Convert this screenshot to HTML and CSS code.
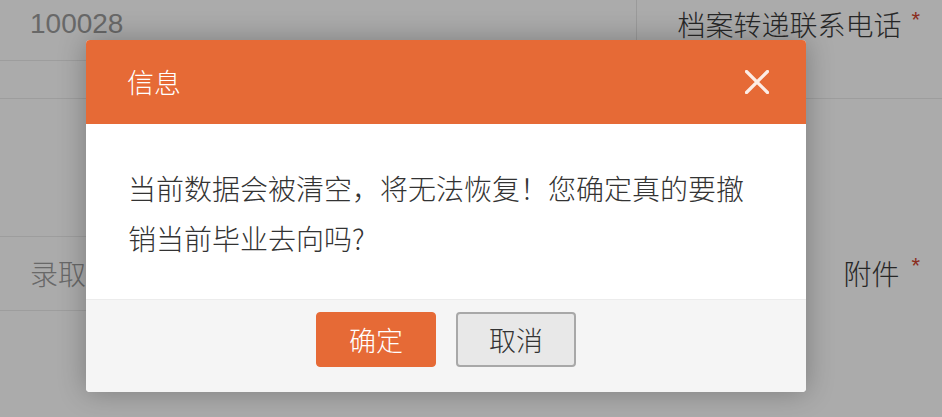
FILE: index.html
```html
<!DOCTYPE html>
<html lang="zh-CN">
<head>
<meta charset="utf-8">
<title>信息</title>
<link rel="stylesheet" href="styles.css">
</head>
<body>
<div class="page">
  <div class="col-left">
    <div class="row row-a"><span class="value">100028</span></div>
    <div class="row row-b"></div>
    <div class="row row-c"></div>
    <div class="row row-d"><span class="value">录取通知书</span></div>
  </div>
  <div class="col-right">
    <div class="rrow rrow-a"><span class="label">档案转递联系电话</span><span class="star">*</span></div>
    <div class="rrow rrow-b"><span class="label">附件</span><span class="star">*</span></div>
  </div>
</div>
<div class="mask"></div>
<div class="dialog">
  <div class="dialog-header">
    <span class="dialog-title">信息</span>
    <span class="dialog-close">
      <svg width="24" height="24" viewBox="0 0 24 24"><path d="M1.5 1.5 L22.5 22.5 M22.5 1.5 L1.5 22.5" stroke="#fff" stroke-opacity="0.88" stroke-width="3.2" stroke-linecap="round" fill="none"/></svg>
    </span>
  </div>
  <div class="dialog-body">当前数据会被清空，将无法恢复！您确定真的要撤销当前毕业去向吗?</div>
  <div class="dialog-footer">
    <button class="btn btn-ok">确定</button>
    <button class="btn btn-cancel">取消</button>
  </div>
</div>
</body>
</html>
```
FILE: styles.css
```css
* { box-sizing: border-box; }
html, body { margin: 0; padding: 0; }
body {
  width: 942px;
  height: 417px;
  overflow: hidden;
  background: #fff;
  font-family: "Liberation Sans", "Noto Sans CJK SC", sans-serif;
  position: relative;
}
.page {
  display: flex;
  height: 417px;
}
.col-left {
  width: 636px;
  display: flex;
  flex-direction: column;
}
.row {
  border-bottom: 1px solid #ebebeb;
  padding-left: 30px;
  font-size: 28px;
  color: #9c9c9c;
}
.row-d .value { font-family: "Noto Sans CJK SC", sans-serif; font-weight: 300; }
.row-a { height: 61px; line-height: 48px; }
.row-b { height: 38px; }
.row-c { height: 138px; }
.row-d { height: 74px; line-height: 72px; }
.col-right {
  flex: 1;
  display: flex;
  flex-direction: column;
}
.rrow {
  display: flex;
  justify-content: flex-end;
  align-items: flex-start;
  padding-right: 22px;
  font-size: 28px;
  color: #3a3a3a;
}
.label {
  font-family: "Noto Sans CJK SC", sans-serif;
  font-weight: 300;
}
.rrow-a {
  height: 99px;
  line-height: 48px;
  border-bottom: 1px solid #ebebeb;
  border-left: 1px solid #e6e6e6;
}
.rrow-b { padding-top: 138px; line-height: 72px; }
.star {
  color: #d0432f;
  font-size: 22px;
  margin-left: 10px;
  line-height: 40px;
}
.rrow-b .star { line-height: 58px; margin-left: 12px; }
.mask {
  position: absolute;
  left: 0; top: 0;
  width: 942px; height: 417px;
  background: rgba(0, 0, 0, 0.33);
}
.dialog {
  position: absolute;
  left: 86px;
  top: 40px;
  width: 720px;
  height: 352px;
  background: #fff;
  border-radius: 4px;
  box-shadow: 0 0 28px rgba(0, 0, 0, 0.28);
  display: flex;
  flex-direction: column;
  overflow: hidden;
}
.dialog-header {
  height: 84px;
  background: #e66a36;
  display: flex;
  align-items: center;
  justify-content: space-between;
  padding: 0 37px 0 41px;
}
.dialog-title {
  color: #fff;
  font-size: 27px;
  line-height: 40px;
  font-weight: 300;
  font-family: "Noto Sans CJK SC", sans-serif;
}
.dialog-close {
  width: 24px;
  height: 24px;
  display: flex;
}
.dialog-body {
  height: 176px;
  padding: 39px 42px 0 42px;
  font-size: 28px;
  line-height: 50px;
  color: #333;
  font-weight: 300;
  font-family: "Noto Sans CJK SC", sans-serif;
  border-bottom: 1px solid #ececec;
}
.dialog-footer {
  flex: 1;
  background: #f5f5f5;
  display: flex;
  justify-content: center;
  gap: 20px;
  padding-top: 12px;
}
.btn {
  width: 120px;
  height: 55px;
  font-size: 27px;
  font-weight: 300;
  font-family: "Noto Sans CJK SC", sans-serif;
  border-radius: 4px;
  padding: 0;
  line-height: 50px;
  cursor: pointer;
}
.btn-ok {
  background: #e66a36;
  border: 1px solid #e66a36;
  color: #fff;
}
.btn-cancel {
  background: #e8e8e8;
  border: 2px solid #a8a8a8;
  color: #333;
}
```
